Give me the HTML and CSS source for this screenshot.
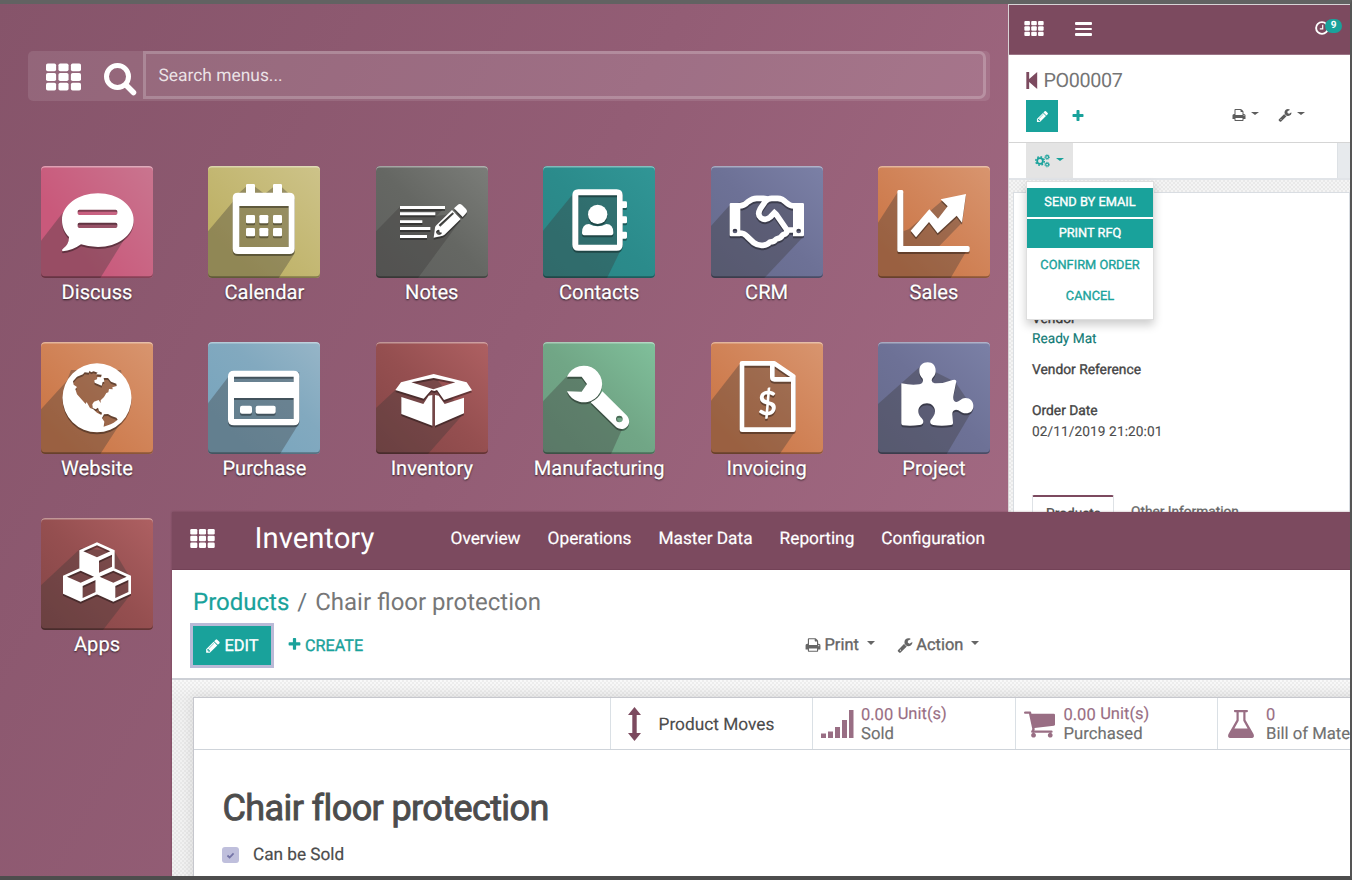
FILE: index.html
```html
<!DOCTYPE html>
<html lang="en">
<head>
<meta charset="utf-8">
<title>Inventory</title>
<link rel="stylesheet" href="styles.css">
</head>
<body>
<svg class="defs" aria-hidden="true">
  <symbol id="th" viewBox="0 0 36 28"><g><rect width="10.4" height="8" rx="1.8"/><rect x="12.8" width="10.4" height="8" rx="1.8"/><rect x="25.6" width="10.4" height="8" rx="1.8"/><rect y="10" width="10.4" height="8" rx="1.8"/><rect x="12.8" y="10" width="10.4" height="8" rx="1.8"/><rect x="25.6" y="10" width="10.4" height="8" rx="1.8"/><rect y="20" width="10.4" height="8" rx="1.8"/><rect x="12.8" y="20" width="10.4" height="8" rx="1.8"/><rect x="25.6" y="20" width="10.4" height="8" rx="1.8"/></g></symbol>
  <symbol id="pencil" viewBox="0 0 1792 1792"><path d="M491 1536l91-91-235-235-91 91v107h128v128h107zm523-928q0-22-22-22-10 0-17 7l-542 542q-7 7-7 17 0 22 22 22 10 0 17-7l542-542q7-7 7-17zm-54-192l416 416-832 832h-416v-416zm683 96q0 53-37 90l-166 166-416-416 166-165q36-38 90-38 53 0 91 38l235 234q37 39 37 91z"/></symbol>
  <symbol id="plus" viewBox="0 0 1792 1792"><path d="M1600 736v192q0 40-28 68t-68 28h-416v416q0 40-28 68t-68 28h-192q-40 0-68-28t-28-68v-416h-416q-40 0-68-28t-28-68v-192q0-40 28-68t68-28h416v-416q0-40 28-68t68-28h192q40 0 68 28t28 68v416h416q40 0 68 28t28 68z"/></symbol>
  <symbol id="print" viewBox="0 0 1792 1792"><path d="M448 1536h896v-256h-896v256zm0-640h896v-384h-160q-40 0-68-28t-28-68v-160h-640v640zm1152 64q0-26-19-45t-45-19-45 19-19 45 19 45 45 19 45-19 19-45zm128 0v416q0 13-9.500 22.500t-22.500 9.500h-224v160q0 40-28 68t-68 28h-960q-40 0-68-28t-28-68v-160h-224q-13 0-22.500-9.500t-9.500-22.500v-416q0-79 56.500-135.500t135.500-56.500h64v-544q0-40 28-68t68-28h672q40 0 88 20t76 48l152 152q28 28 48 76t20 88v256h64q79 0 135.500 56.500t56.500 135.500z"/></symbol>
  <symbol id="wrench" viewBox="0 0 1792 1792"><path d="M448 1472q0-26-19-45t-45-19-45 19-19 45 19 45 45 19 45-19 19-45zm644-420l-682 682q-37 37-90 37-52 0-91-37l-106-108q-38-36-38-90 0-53 38-91l681-681q39 98 114.500 173.500t173.500 114.500zm634-435q0 39-23 106-47 134-164.500 217.500t-258.500 83.500q-185 0-316.500-131.500t-131.500-316.500 131.500-316.500 316.500-131.500q58 0 121.500 16.500t107.500 46.500q16 11 16 28t-16 28l-293 169v224l193 107q5-3 79-48.500t135.500-81 70.500-35.500q15 0 23.500 10t8.500 25z"/></symbol>
  <symbol id="cart" viewBox="64 256 1664 1408"><path d="M704 1536q0 52-38 90t-90 38-90-38-38-90 38-90 90-38 90 38 38 90zm896 0q0 52-38 90t-90 38-90-38-38-90 38-90 90-38 90 38 38 90zm128-1088v512q0 24-16.500 42.500t-40.500 21.500l-1044 122q13 60 13 70 0 16-24 64h920q26 0 45 19t19 45-19 45-45 19h-1024q-26 0-45-19t-19-45q0-11 8-31.500t16-36 21.500-40 15.500-29.500l-177-823h-204q-26 0-45-19t-19-45 19-45 45-19h256q16 0 28.500 6.500t19.500 15.500 13 24.500 8 26 5.500 29.500 4.500 26h1201q26 0 45 19t19 45z"/></symbol>
  <symbol id="cube" viewBox="0 0 106 102" overflow="visible"><path fill-rule="evenodd" d="M53 0L106 24V78L53 102L0 78V24ZM53 9L12 27L53 45L93 27ZM59 55V91L98 73V37Z"/></symbol>
</svg>

<main class="home">
  <div class="search">
    <svg class="search-th"><use href="#th"/></svg>
    <svg class="search-glass" viewBox="0 0 33 33"><circle cx="13.500" cy="13.500" r="11" fill="none" stroke-width="5"/><path d="M22 22L29.500 29.500" stroke-width="5.500" stroke-linecap="round"/></svg>
    <div class="search-input">Search menus...</div>
  </div>
  <div class="apps">
    <a class="app"><span class="tile pink"><svg viewBox="0 0 336 336"><path class="long" d="M0 224L64 142L278 162L262 200L178 336H0Z"/><g class="icon"><path fill-rule="evenodd" d="M171 82C230 82 278 118 278 162C278 208 230 243 171 243Q144 243 120 235Q94 254 65 256Q60 252 66 248Q84 236 84 213C70 199 63 182 63 162C63 118 112 82 171 82ZM115 131Q110 131 110 136V142Q110 147 115 147H224Q229 147 229 142V136Q229 131 224 131ZM115 170Q110 170 110 175V181Q110 186 115 186H224Q229 186 229 181V175Q229 170 224 170Z"/></g></svg></span><span class="name">Discuss</span></a>
    <a class="app"><span class="tile olive"><svg viewBox="0 0 336 336"><path class="long" d="M0 196L74 108L92 82L114 62H141L170 84L195 64H222L260 100V262L212 336H0Z"/><g class="icon"><path fill-rule="evenodd" d="M90 80H114V58Q114 54 118 54H137Q141 54 141 58V80H195V58Q195 54 199 54H218Q222 54 222 58V80H244Q260 80 260 96V248Q260 264 244 264H90Q74 264 74 248V96Q74 80 90 80ZM94 120V243H242V120Z"/><rect x="114" y="147" width="27" height="25" rx="4"/><rect x="154" y="147" width="27" height="25" rx="4"/><rect x="195" y="147" width="27" height="25" rx="4"/><rect x="114" y="186" width="27" height="25" rx="4"/><rect x="154" y="186" width="27" height="25" rx="4"/><rect x="195" y="186" width="27" height="25" rx="4"/></g></svg></span><span class="name">Calendar</span></a>
    <a class="app"><span class="tile gray"><svg viewBox="0 0 336 336"><path class="long" d="M0 196L72 122L206 126L180 150L272 138L126 336H0Z"/><g class="icon"><path d="M72 120H207V129H72ZM72 139H178V148H72ZM72 163H139V171H72ZM72 183H163V192H72ZM72 207H153V216H72Z"/><path fill-rule="evenodd" d="M173 215L177 185Q178 181 181 178L228 132L254 159L208 204Q205 207 200 209ZM188 177L193 182L234 143L230 139ZM180 197Q184 190 190 192L191 199L198 200Q197 206 190 207Q181 206 180 197Z"/><path d="M234 127L245 117Q251 111 258 117L270 129Q276 136 270 142L260 153Z"/></g></svg></span><span class="name">Notes</span></a>
    <a class="app"><span class="tile teal"><svg viewBox="0 0 336 336"><path class="long" d="M0 194L88 86L240 80V238L192 336H0Z"/><g class="icon"><path fill-rule="evenodd" d="M106 70H221Q239 70 239 88V106H248Q252 106 252 110V122Q252 126 248 126H239V151H248Q252 151 252 155V168Q252 172 248 172H239V197H248Q252 197 252 201V214Q252 218 248 218H239V236Q239 254 221 254H106Q88 254 88 236V88Q88 70 106 70ZM106 88V236H222V88Z"/><circle cx="164" cy="145" r="29"/><path d="M127 208Q117 208 117 200Q117 174 138 174Q164 188 190 174Q211 174 211 200Q211 208 201 208Z"/></g></svg></span><span class="name">Contacts</span></a>
    <a class="app"><span class="tile indigo"><svg viewBox="0 0 336 336"><path class="long" d="M0 180L56 118L150 90L246 112L279 210L160 336H0Z"/><g class="icon"><path fill-rule="evenodd" d="M60 111H88V211H60Q56 211 56 207V115Q56 111 60 111ZM72 188A7 7 0 1 0 72 202A7 7 0 1 0 72 188Z"/><path fill-rule="evenodd" d="M246 111H275Q279 111 279 115V207Q279 211 275 211H246ZM263 188A7 7 0 1 0 263 202A7 7 0 1 0 263 188Z"/><path class="line" stroke-width="17" d="M84 120Q100 120 110 108Q124 97 137 97H158Q166 97 172 101M84 201Q100 201 108 211L128 230Q142 240 156 238Q170 237 177 228Q190 228 196 219Q210 217 216 206Q229 203 228 192L194 143M196 134L178 153Q164 166 149 155Q138 146 148 128L163 106Q171 97 182 97H200Q214 97 226 110Q238 121 250 120M229 192H250"/></g></svg></span><span class="name">CRM</span></a>
    <a class="app"><span class="tile orange"><svg viewBox="0 0 336 336"><path class="long" d="M0 170L58 80H76V196L92 190L188 108L262 90L252 170L184 240H274L218 336H0Z"/><g class="icon"><path d="M62 72H72Q76 72 76 77V240H270Q275 240 275 245V253Q275 258 270 258H62Q58 258 58 253V77Q58 72 62 72Z"/><path d="M98 194L154 130L180 158L209 121L188 100L264 84L252 170L236 149L179 202L153 168L114 214Z"/></g></svg></span><span class="name">Sales</span></a>
    <a class="app"><span class="tile orange"><svg viewBox="0 0 336 336"><path class="long" d="M0 202L78 116L90 84H240L260 210L178 336H0Z"/><g class="icon"><path fill-rule="evenodd" d="M168 64A103 103 0 1 1 168 271A103 103 0 1 1 168 64ZM96 118L108 104L126 97L131 91L143 92L146 86L150 91L158 88L170 92L165 97L182 98L180 106L169 105L168 112L160 115L161 122L175 128L182 131L185 120L190 119L188 108L201 108L210 119L226 125L227 132L214 136L215 142L204 141L202 151L196 153L189 165L179 175L179 183L173 174L159 179L154 187L155 198L164 202L171 197L174 207L183 212L181 219L168 212L157 202L147 198L137 180L134 186L124 175L108 157L103 141L108 135L98 128ZM189 217L201 216L211 222L226 227L230 233L218 242L209 247L188 254L190 239L183 228Z"/></g></svg></span><span class="name">Website</span></a>
    <a class="app"><span class="tile blue"><svg viewBox="0 0 336 336"><path class="long" d="M0 184L60 106L274 90V242L216 336H0Z"/><g class="icon"><path fill-rule="evenodd" d="M78 86H257Q274 86 274 103V233Q274 250 257 250H78Q60 250 60 233V103Q60 86 78 86ZM78 104V120H257V104ZM78 168V231H257V168Z"/><rect x="96" y="191" width="36" height="24" rx="6"/><rect x="143" y="191" width="60" height="24" rx="6"/></g></svg></span><span class="name">Purchase</span></a>
    <a class="app"><span class="tile maroon"><svg viewBox="0 0 336 336"><path class="long" d="M0 198L58 144L173 100L264 214L156 336H0Z"/><g class="icon"><path fill-rule="evenodd" d="M173 96L272 121L288 145L204 174L183 144L175 147L166 144L143 170L58 144L75 121ZM173 108L106 121L172 142L238 121Z"/><path d="M76 165L142 186L158 161L169 159V251L76 216ZM177 159L188 161L206 186L264 167V214L177 251Z"/></g></svg></span><span class="name">Inventory</span></a>
    <a class="app"><span class="tile green"><svg viewBox="0 0 336 336"><path class="long" d="M0 178L72 102L126 100L240 256L204 336H0Z"/><g class="icon"><path d="M72 104A55 55 0 1 1 72 148L116 149L132 126L116 104Z"/><path fill-rule="evenodd" d="M178 148L252 221C271 246 244 272 220 256L143 181Q165 172 178 148ZM229 221A10 10 0 1 0 229 241A10 10 0 1 0 229 221Z"/></g></svg></span><span class="name">Manufacturing</span></a>
    <a class="app"><span class="tile orange"><svg viewBox="0 0 336 336"><path class="long" d="M0 176L86 66L190 60L254 104V266L206 336H0Z"/><g class="icon"><path class="line" stroke-width="14" d="M93 64H190L247 103V263H93ZM184 66V106Q184 112 190 112H246"/><text class="dollar" x="169" y="218">$</text></g></svg></span><span class="name">Invoicing</span></a>
    <a class="app"><span class="tile indigo"><svg viewBox="0 0 336 336"><path class="long" d="M0 186L124 76L172 90L232 120L286 200L206 336H0Z"/><g class="icon"><path d="M70 124Q101 131 124 127Q138 124 134 110C128 102 124 98 124 86C124 70 134 61 149 61C164 61 173 71 173 86C173 98 168 102 163 109Q157 121 170 124Q196 125 224 114Q235 111 235 118L227 157Q222 180 236 180C247 177 250 168 262 168C277 168 286 178 286 192C286 206 277 214 263 214C249 214 245 203 234 203Q222 204 223 218L225 241Q226 248 219 249Q190 254 166 249Q153 246 158 234C165 226 171 218 171 208C171 194 160 184 147 184C132 184 121 194 121 208C121 221 130 226 135 234Q139 248 124 249Q100 253 74 250Q70 249 70 244Z"/></g></svg></span><span class="name">Project</span></a>
    <a class="app"><span class="tile maroon"><svg viewBox="0 0 336 336"><path class="long" d="M0 202L120 90L220 100L268 180V230L186 336H0Z"/><g class="icon"><use href="#cube" x="115" y="73" width="106" height="102"/><use href="#cube" x="66" y="149" width="106" height="102"/><use href="#cube" x="164" y="149" width="106" height="102"/></g></svg></span><span class="name">Apps</span></a>
  </div>
</main>

<section class="mobile">
  <header class="m-nav">
    <svg class="m-th"><use href="#th"/></svg>
    <span class="burger"><i></i><i></i><i></i></span>
    <span class="activity"><svg viewBox="0 0 14 14"><circle cx="7" cy="7" r="5.900" fill="none" stroke-width="1.900"/><path d="M7.700 3.800V7.800H4.800" fill="none" stroke-width="1.200"/></svg><b>9</b></span>
  </header>
  <div class="m-panel">
    <div class="m-title"><svg viewBox="0 0 12 18"><path d="M0 0H3V7.500L11.500 0V18L3 10.500V18H0Z"/></svg><span>PO00007</span></div>
    <div class="m-actions">
      <span class="m-edit"><svg><use href="#pencil"/></svg></span>
      <svg class="m-plus"><use href="#plus"/></svg>
      <svg class="m-print"><use href="#print"/></svg><i class="caret"></i>
      <svg class="m-wrench"><use href="#wrench"/></svg><i class="caret"></i>
    </div>
  </div>
  <div class="m-status">
    <span class="m-cogs"><svg viewBox="0 0 42 38"><g fill="none"><circle cx="14" cy="19" r="8" stroke-width="5"/><circle cx="14" cy="19" r="12" stroke-width="4" stroke-dasharray="4.710 4.710"/><circle cx="34" cy="8" r="4" stroke-width="3"/><circle cx="34" cy="8" r="6.500" stroke-width="2.500" stroke-dasharray="2.900 2.200"/><circle cx="34" cy="29" r="4" stroke-width="3"/><circle cx="34" cy="29" r="6.500" stroke-width="2.500" stroke-dasharray="2.900 2.200"/></g></svg><i class="caret"></i></span>
    <span class="m-stage"></span>
  </div>
  <div class="m-content">
    <div class="m-sheet">
      <strong class="m-label vendor">Vendor</strong>
      <span class="m-link">Ready Mat</span>
      <strong class="m-label ref">Vendor Reference</strong>
      <strong class="m-label date">Order Date</strong>
      <span class="m-value">02/11/2019 21:20:01</span>
      <div class="m-tabs"><span class="tab active">Products</span><span class="tab">Other Information</span></div>
    </div>
  </div>
  <div class="m-menu">
    <span class="item solid">SEND BY EMAIL</span>
    <span class="item solid">PRINT RFQ</span>
    <span class="item">CONFIRM ORDER</span>
    <span class="item">CANCEL</span>
  </div>
</section>

<section class="inventory">
  <header class="nav">
    <svg class="nav-th"><use href="#th"/></svg>
    <span class="brand">Inventory</span>
    <nav><span>Overview</span><span>Operations</span><span>Master Data</span><span>Reporting</span><span>Configuration</span></nav>
  </header>
  <div class="panel">
    <div class="crumbs"><span class="crumb-link">Products</span><span class="slash">/</span><span>Chair floor protection</span></div>
    <div class="buttons">
      <span class="edit"><svg><use href="#pencil"/></svg>EDIT</span>
      <span class="create"><svg><use href="#plus"/></svg>CREATE</span>
      <span class="tool print"><svg><use href="#print"/></svg>Print<i class="caret"></i></span>
      <span class="tool"><svg><use href="#wrench"/></svg>Action<i class="caret"></i></span>
    </div>
  </div>
  <div class="content">
    <div class="sheet">
      <div class="stats">
        <div class="stat moves"><svg class="s-arrows" viewBox="0 0 13 34"><path d="M6.500 0L13 8H8.700V26H13L6.500 34L0 26H4.300V8H0Z"/></svg><span class="moves-text">Product Moves</span></div>
        <div class="stat sold"><svg class="s-signal" viewBox="0 0 33 28"><path d="M0 23.500h5v4.500h-5zM7 21.500h5v6.500h-5zM14 17h5v11h-5zM21 10h5v18h-5zM28 0h4.500v28h-4.500z"/></svg><span class="stat-text"><b>0.00<em>Unit(s)</em></b>Sold</span></div>
        <div class="stat bought"><svg class="s-cart"><use href="#cart"/></svg><span class="stat-text"><b>0.00<em>Unit(s)</em></b>Purchased</span></div>
        <div class="stat bom"><svg class="s-flask" viewBox="0 0 26 28"><path fill-rule="evenodd" d="M7 0H19Q20 0 20 1T19 2.200H17.500V10L25.500 24Q27 28 23 28H3Q-1 28 .500 24L8.500 10V2.200H7Q6 2.200 6 1T7 0ZM10.700 2.200V10.700L6.400 18.400H19.600L15.300 10.700V2.200Z"/></svg><span class="stat-text"><b>0</b>Bill of Materials</span></div>
      </div>
      <h1>Chair floor protection</h1>
      <div class="check"><span class="box"><svg viewBox="0 0 10 8"><path d="M1.500 4L4 6.300L8.500 1.500" fill="none" stroke-width="2"/></svg></span>Can be Sold</div>
    </div>
  </div>
</section>
<div class="frame"></div>
</body>
</html>
```
FILE: styles.css
```css
* { box-sizing: border-box; }
html, body { margin: 0; height: 880px; overflow: hidden; }
body { position: relative; width: 1352px; font-family: Roboto, "Liberation Sans", sans-serif; background: #4d4d4d; color: #4c4c4c; text-rendering: geometricPrecision; }
svg { display: block; fill: currentColor; stroke: none; flex: none; }
.defs { position: absolute; width: 0; height: 0; }
i, em { font-style: normal; }

/* Home screen */
.home { height: 876px; padding: 51px 0 0 28px; background: linear-gradient(118deg, #86546a 0%, #935d75 38%, #a46b84 78%); }
.search { display: flex; width: 962px; height: 50px; border-radius: 5px; background: rgba(255,255,255,.1); color: #fff; }
.search-th { width: 35px; height: 28px; margin: 12px 0 0 18px; }
.search-glass { width: 33px; height: 33px; margin: 12px 0 0 22.600px; stroke: #fff; }
.search-input { flex: none; width: 843px; height: 48px; margin-left: 6.400px; padding-left: 12.500px; border: 3px solid rgba(255,255,255,.2); border-radius: 0 7px 7px 0; line-height: 45px; font-size: 17.400px; color: rgba(255,255,255,.82); background: rgba(255,255,255,.02); }
.apps { display: grid; grid-template-columns: repeat(6, 167.4px); grid-auto-rows: 176.300px; width: 1005px; margin: 64.500px 0 0 -14.700px; }
.app { display: flex; flex-direction: column; align-items: center; }
.tile { display: block; width: 112px; height: 112px; overflow: hidden; border-radius: 4px; position: relative; }
.tile svg { width: 112px; height: 112px; }
.tile::after { content: ""; position: absolute; inset: 0; border-radius: 4px; box-shadow: inset 0 1.500px 0 rgba(255,255,255,.4), inset 0 -1.800px 0 rgba(0,0,0,.32); }
.long { fill: rgba(60,55,55,.34); }
.icon { fill: #fff; filter: drop-shadow(0 6px 0 rgba(0,0,0,.36)); }
.line { fill: none; stroke: #fff; stroke-linejoin: round; }
.dollar { font: 700 100px Lato, sans-serif; text-anchor: middle; }
.name { height: 28px; line-height: 28px; font-size: 20.100px; -webkit-text-stroke: .2px; color: #fff; text-shadow: 0 1px 2px rgba(0,0,0,.75); }
.pink { background: linear-gradient(55deg, #c9597b 30%, #c9758f); }
.olive { background: linear-gradient(45deg, #bdb064 20%, #cdc389); }
.gray { background: linear-gradient(45deg, #5f605e, #656763 50%, #7b7d79); }
.teal { background: linear-gradient(45deg, #2b8585, #2b8b8b 50%, #319696); }
.indigo { background: linear-gradient(45deg, #666b8c, #6d7196 50%, #7b80a6); }
.orange { background: linear-gradient(45deg, #cb7646 15%, #d18459 55%, #d8956f); }
.blue { background: linear-gradient(45deg, #79a5bd 20%, #82a9bf 60%, #96b5c7); }
.maroon { background: linear-gradient(45deg, #844546, #954f50 50%, #ae6062); }
.green { background: linear-gradient(45deg, #6b9b80, #71a686 50%, #80c09b); }

/* Purchase order on a phone */
.mobile { position: absolute; left: 1008px; top: 4px; width: 342px; height: 508px; overflow: hidden; border-left: 1px solid #d9d3d6; border-top: 1px solid #d9d3d6; background: #fff; }
.m-nav { display: flex; height: 50px; background: #7c4a5f; border-bottom: 1px solid #9b7485; color: #fff; }
.m-th { width: 20px; height: 15px; margin: 16px 0 0 15px; }
.burger { display: grid; gap: 3px; align-content: start; width: 17px; margin: 17px 0 0 31px; }
.burger i { height: 2.700px; border-radius: 1px; background: #fff; }
.activity { display: flex; margin: 15px 0 0 223px; }
.activity svg { width: 14px; height: 14px; margin-top: 1px; stroke: #fff; }
.activity b { position: relative; left: -4px; top: -1px; width: 17px; height: 14px; border-radius: 7px; background: #19a29b; font-size: 10px; line-height: 14px; text-align: center; }
.m-panel { height: 88px; border-bottom: 1px solid #d5d5d5; }
.m-title { display: flex; align-items: center; gap: 5.500px; height: 48px; padding: 2px 0 0 17px; font-size: 19.800px; letter-spacing: -.4px; color: #757575; }
.m-title svg { width: 12px; height: 17px; color: #7c4a5f; }
.m-actions { display: flex; align-items: center; height: 32px; margin-top: -3px; padding-left: 17px; color: #5c5c5c; }
.m-edit { display: grid; place-items: center; width: 32px; height: 32px; background: #19a29b; color: #fff; }
.m-edit svg { width: 13px; height: 13px; margin-top: 1px; }
.m-plus { width: 14px; height: 14px; margin: -1px 0 0 12.500px; color: #19a29b; }
.m-print { width: 14px; height: 14px; margin: -2px 5px 0 147.500px; }
.m-wrench { width: 14px; height: 14px; margin: -2px 5px 0 19px; }
.caret { width: 0; height: 0; border: 4px solid transparent; border-top: 3.500px solid currentColor; border-bottom: 0; flex: none; margin-top: -5px; }
.m-status { display: flex; justify-content: space-between; height: 37px; padding-left: 17px; border-bottom: 2px solid #e1e4e8; }
.m-cogs { display: flex; align-items: center; gap: 6px; width: 47px; padding-left: 9px; background: #e4e4e4; color: #19a29b; }
.m-cogs svg { width: 15px; height: 14px; stroke: #19a29b; }
.m-cogs .caret { margin-top: -3px; }
.m-stage { width: 13px; background: #e7eaed; border-left: 1px solid #dde1e5; }
.m-content { height: 340px; padding: 12px 0 0 4px; background: repeating-conic-gradient(#e9e9e9 0 25%, #f4f4f4 0 50%) 0 0 / 4px 4px; }
.m-sheet { display: flex; flex-direction: column; height: 330px; padding: 116px 0 0 18px; border: 1.500px solid #d9dde2; background: #fff; font-size: 13.700px; line-height: 20px; }
.m-label { font-weight: 400; -webkit-text-stroke: .35px; font-size: 13.800px; color: #454545; }
.m-link { color: #117a75; -webkit-text-stroke: .15px; }
.m-label.ref { margin-top: 11px; }
.m-label.date { margin-top: 21px; }
.m-value { margin-top: 1px; -webkit-text-stroke: .1px; letter-spacing: .08px; }
.m-tabs { display: flex; margin-top: 53px; }
.tab { height: 40px; padding: 8px 17px 0; font-size: 13.700px; -webkit-text-stroke: .3px; line-height: 18px; color: #666; }
.tab.active { width: 82px; padding: 8px 13px 0; border: 1px solid #dee2e6; border-top: 2px solid #7c4a5f; border-radius: 2px 2px 0 0; color: #4c4c4c; }
.m-menu { position: absolute; left: 17px; top: 176px; width: 128px; height: 139px; padding-top: 6px; background: #fff; border: 1px solid #dedede; box-shadow: 0 5px 9px rgba(0,0,0,.2); }
.item { display: block; height: 29px; margin-bottom: 2.300px; line-height: 30px; text-align: center; font-size: 12.800px; -webkit-text-stroke: .35px; color: #19a29b; }
.item.solid { background: #19a29b; color: #fff; }

/* Product form */
.inventory { position: absolute; left: 172px; top: 512px; width: 1178px; height: 364px; overflow: hidden; background: #fff; box-shadow: 0 0 2px rgba(70,30,45,.4); }
.nav { display: flex; height: 58px; background: #7c4a5f; border-bottom: 1px solid #734257; color: #fff; }
.nav-th { width: 25px; height: 19px; margin: 17px 0 0 18px; }
.brand { width: 196px; padding-left: 39.500px; line-height: 55px; font-size: 29.300px; }
nav { display: flex; gap: 27px; padding-left: 39.500px; line-height: 55px; font-size: 17.300px; -webkit-text-stroke: .2px; white-space: nowrap; }
.panel { height: 110px; border-bottom: 2px solid #cdd0d6; }
.crumbs { display: flex; height: 53px; padding: 4px 0 0 21px; line-height: 56px; font-size: 24px; color: #777; white-space: nowrap; }
.crumb-link { color: #19a29b; -webkit-text-stroke: .2px; }
.slash { margin: 0 8px; color: #6c757d; }
.buttons { display: flex; align-items: center; height: 44px; padding-left: 18px; font-size: 16.400px; -webkit-text-stroke: .35px; }
.buttons svg { -webkit-text-stroke: 0; }
.edit { display: flex; align-items: center; justify-content: center; gap: 3px; width: 84px; height: 45px; padding-top: 2px; border: 3px solid #babad7; background: #19a29b; color: #fff; }
.edit svg { width: 16px; height: 16px; }
.create { display: flex; align-items: center; gap: 3px; width: 531px; padding: 1px 0 0 13px; font-size: 16.200px; color: #19a29b; }
.create svg { width: 15px; height: 15px; margin-top: -2px; }
.tool { display: flex; align-items: center; gap: 3px; margin-right: 22px; padding-top: 1px; color: #666; }
.tool svg { width: 16px; height: 16px; margin: -2px .500px 0 0; }
.tool .caret { border-width: 4px 4px 0; margin: -6px 0 0 5px; }
.content { height: 200px; padding: 17px 0 0 21px; background: linear-gradient(rgba(0,0,0,0), rgba(0,0,0,.03) 18px, rgba(0,0,0,.03)), repeating-conic-gradient(#eee 0 25%, #f9f9f9 0 50%) 0 0 / 4px 4px; }
.sheet { width: 1170px; height: 200px; border: 1.500px solid #c6c7cd; background: #fff; box-shadow: 0 0 12px rgba(0,0,0,.1); }
.stats { display: flex; height: 52px; padding-left: 415.500px; border-bottom: 1.500px solid #cfd4da; font-size: 16.700px; }
.stat { flex: none; display: flex; width: 202.500px; border-left: 1.500px solid #dae0e5; color: #996e84; }
.moves { color: #7c4a5f; }
.s-arrows { width: 13px; height: 34px; margin: 9px 0 0 17px; }
.moves-text { margin-left: 18px; line-height: 54px; font-size: 17.300px; -webkit-text-stroke: .15px; color: #4c4c4c; }
.s-signal { width: 33px; height: 28px; margin: 12px 7px 0 8px; }
.s-cart { width: 31px; height: 27px; margin: 13px 8.500px 0 8.500px; }
.s-flask { width: 26px; height: 28px; margin: 12px 12px 0 10px; }
.stat-text { padding-top: 8px; line-height: 19px; color: #707070; white-space: nowrap; -webkit-text-stroke: .15px; }
.stat-text b { display: block; height: 19px; font-weight: 400; font-size: 16.500px; color: #996e84; }
.stat-text em { position: relative; top: -1px; margin-left: 4.500px; }
h1 { margin: 33px 0 0 28.500px; font-size: 36px; line-height: 50px; font-weight: 400; -webkit-text-stroke: .9px; letter-spacing: -.6px; color: #4c4c4c; }
.check { display: flex; align-items: center; gap: 14px; margin: 10px 0 0 28px; height: 24px; font-size: 17.200px; -webkit-text-stroke: .2px; }
.box { display: grid; place-items: center; width: 17px; height: 16px; border-radius: 3px; background: #bfbfdc; }
.box svg { width: 9px; height: 7px; stroke: #7474a7; }

/* Outer screen edge */
.frame { position: absolute; inset: 0; pointer-events: none; border: solid #555; border-width: 4px 2px 4px 0; border-color: #626262 #555 #4d4d4d; }
```
